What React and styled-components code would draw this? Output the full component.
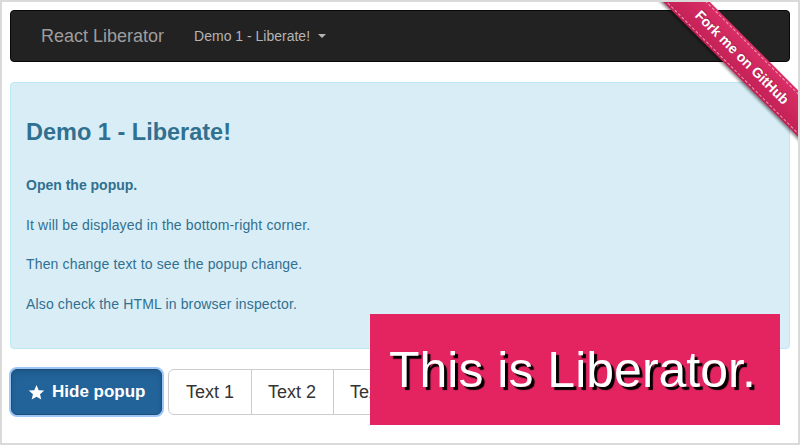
import React from "react";
import styled, { createGlobalStyle } from "styled-components";

const Global = createGlobalStyle`
  html, body { margin: 0; padding: 0; background: #fff; }
  body { font-family: "Liberation Sans", Arial, sans-serif; font-size: 14px; line-height: 20px; color: #333; }
  * { box-sizing: border-box; }
`;

const Frame = styled.div`
  position: relative;
  width: 800px;
  height: 445px;
  border: 2px solid #dadada;
  padding: 8px;
  overflow: hidden;
  background: #fff;
`;

const Navbar = styled.nav`
  display: flex;
  align-items: center;
  height: 52px;
  padding: 0 15px;
  margin-bottom: 20px;
  background: #222;
  border: 1px solid #080808;
  border-radius: 4px;
`;

const Brand = styled.span`
  padding: 15px;
  font-size: 18px;
  line-height: 20px;
  color: #9d9d9d;
`;

const NavLink = styled.span`
  display: flex;
  align-items: center;
  padding: 15px;
  font-size: 14px;
  line-height: 20px;
  color: #b4b4b4;
`;

const Caret = styled.span`
  display: inline-block;
  width: 0;
  height: 0;
  margin-left: 8px;
  border-top: 4px solid #b4b4b4;
  border-left: 4px solid transparent;
  border-right: 4px solid transparent;
`;

const Alert = styled.div`
  padding: 15px;
  background: #d9edf7;
  border: 1px solid #bce8f1;
  border-radius: 4px;
  color: #31708f;
`;

const Heading = styled.h3`
  margin: 21px 0 30px;
  font-size: 23.5px;
  font-weight: 700;
  line-height: 26px;
`;

const Para = styled.p`
  margin: 0 0 19.5px;
  line-height: 20px;
  font-weight: ${(p) => (p.$bold ? 700 : 400)};
  letter-spacing: ${(p) => (p.$bold ? "0" : "0.15px")};
`;

const Toolbar = styled.div`
  display: flex;
  align-items: center;
  margin-top: 20px;
  padding-left: 1px;
`;

const PrimaryButton = styled.button`
  display: flex;
  align-items: center;
  gap: 7px;
  height: 46px;
  padding: 10px 16px;
  font-family: inherit;
  font-size: 17px;
  font-weight: 700;
  line-height: 24px;
  color: #fff;
  background: #22639a;
  border: 1px solid #1d4f7a;
  border-radius: 6px;
  box-shadow: 0 0 0 2px rgba(125, 180, 245, 0.75), inset 0 3px 5px rgba(0, 0, 0, 0.12);
`;

const Group = styled.div`
  display: flex;
  margin-left: 6px;
`;

const GroupButton = styled.button`
  height: 46px;
  padding: 10px 16.5px;
  font-family: inherit;
  font-size: 18px;
  line-height: 24px;
  color: #333;
  background: #fff;
  border: 1px solid #ccc;
  margin-left: -1px;
  border-radius: 0;
  &:first-child {
    margin-left: 0;
    border-radius: 6px 0 0 6px;
  }
  &:last-child {
    border-radius: 0 6px 6px 0;
  }
`;

const RibbonWrap = styled.div`
  position: absolute;
  top: 0;
  right: 0;
  width: 150px;
  height: 150px;
  overflow: hidden;
  z-index: 5;
  pointer-events: none;
`;

const Ribbon = styled.div`
  position: absolute;
  left: -12px;
  top: 39px;
  width: 212px;
  padding: 2px 0;
  transform: rotate(45deg);
  background-color: #d92560;
  background-image: linear-gradient(to bottom, rgba(255, 255, 255, 0.04), rgba(0, 0, 0, 0.1));
  box-shadow: 0 2px 3px rgba(0, 0, 0, 0.45);
`;

const RibbonText = styled.a`
  display: block;
  padding: 2px 0;
  line-height: 23px;
  text-align: center;
  font-family: "Liberation Sans", Arial, sans-serif;
  font-size: 14px;
  font-weight: 700;
  color: #fff;
  text-decoration: none;
  text-shadow: 0 -1px rgba(0, 0, 0, 0.3);
  border-top: 1px dashed rgba(255, 255, 255, 0.55);
  border-bottom: 1px dashed rgba(255, 255, 255, 0.55);
`;

const Popup = styled.div`
  position: absolute;
  right: 18px;
  bottom: 18px;
  width: 410px;
  height: 111px;
  display: flex;
  align-items: center;
  padding: 0 19px;
  background: #e32461;
  color: #fff;
  font-family: "Liberation Sans", Arial, sans-serif;
  font-size: 50px;
  line-height: 56px;
  white-space: nowrap;
  text-shadow: 3px 3px 1px #000;
  z-index: 4;
`;

const Star = () => (
  <svg width="17" height="17" viewBox="0 0 24 24" aria-hidden="true">
    <path
      fill="#fff"
      d="M12 1.5l3.1 7.2 7.8.6-5.9 5.1 1.8 7.6L12 17.9 5.2 22l1.8-7.6L1.1 9.3l7.8-.6z"
    />
  </svg>
);

export default function App() {
  return (
    <>
      <Global />
      <Frame>
        <Navbar>
          <Brand>React Liberator</Brand>
          <NavLink>
            Demo 1 - Liberate!
            <Caret />
          </NavLink>
        </Navbar>
        <Alert>
          <Heading>Demo 1 - Liberate!</Heading>
          <Para $bold>Open the popup.</Para>
          <Para>It will be displayed in the bottom-right corner.</Para>
          <Para>Then change text to see the popup change.</Para>
          <Para>Also check the HTML in browser inspector.</Para>
        </Alert>
        <Toolbar>
          <PrimaryButton>
            <Star />
            Hide popup
          </PrimaryButton>
          <Group>
            <GroupButton>Text 1</GroupButton>
            <GroupButton>Text 2</GroupButton>
            <GroupButton>Text 3</GroupButton>
          </Group>
        </Toolbar>
        <RibbonWrap>
          <Ribbon>
            <RibbonText>Fork me on GitHub</RibbonText>
          </Ribbon>
        </RibbonWrap>
        <Popup>This is Liberator.</Popup>
      </Frame>
    </>
  );
}
